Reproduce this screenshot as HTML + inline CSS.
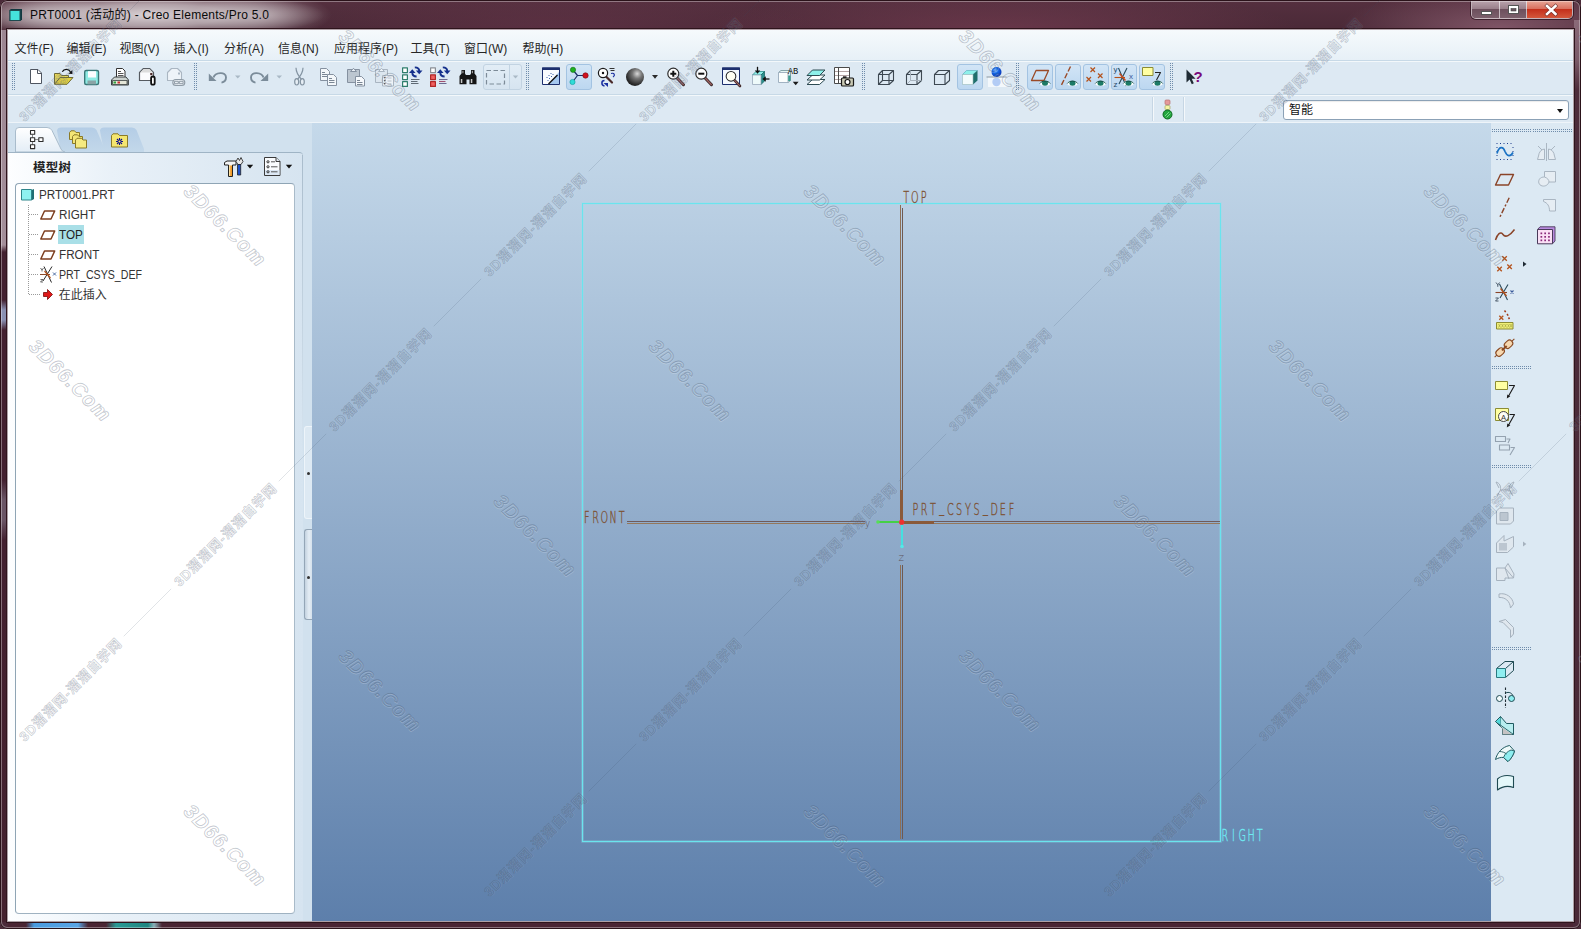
<!DOCTYPE html>
<html lang="zh-CN">
<head>
<meta charset="utf-8">
<title>PRT0001 (活动的) - Creo Elements/Pro 5.0</title>
<style>
*{box-sizing:border-box;margin:0;padding:0}
html,body{width:1581px;height:929px;overflow:hidden;background:#4a2a38}
body{font-family:"Liberation Sans","Noto Sans CJK SC",sans-serif;font-size:12px;color:#222;position:relative}
#frame{position:absolute;left:0;top:0;width:1581px;height:929px;background:#4b2a39;border-radius:7px;overflow:hidden}
#titleglow{position:absolute;left:0;top:0;width:1581px;height:30px;
 background:
  radial-gradient(ellipse 175px 24px at 150px 15px,rgba(255,255,255,.78) 0,rgba(255,255,255,.55) 45%,rgba(255,255,255,0) 100%),
  radial-gradient(ellipse 70px 22px at 40px 15px,rgba(255,255,255,.45),rgba(255,255,255,0) 100%),
  radial-gradient(ellipse 70px 22px at 262px 15px,rgba(255,255,255,.4),rgba(255,255,255,0) 100%),
  radial-gradient(ellipse 160px 40px at 1500px 28px,rgba(170,120,140,.55),rgba(170,120,140,0) 100%),
  radial-gradient(ellipse 300px 40px at 1000px 30px,rgba(140,70,95,.45),rgba(140,70,95,0) 100%),
  radial-gradient(ellipse 260px 40px at 560px 30px,rgba(120,60,85,.35),rgba(120,60,85,0) 100%),
  linear-gradient(#55303f,#4a2937)}
#lstrip{position:absolute;left:1px;top:30px;width:6px;height:892px;background:linear-gradient(#9c8692 0,#a48f9a 215px,#432130 222px,#432130 270px,#8a90b2 280px,#8a90b2 290px,#432130 300px,#432130 450px,#6a5565 470px,#6a5565 490px,#432130 510px,#45222f 100%)}
#rstrip{position:absolute;left:1574px;top:20px;width:6px;height:902px;background:linear-gradient(#8a6a78 0,#7a5a68 40px,#4d2c3a 70px,#4a2937 100%)}
#bstrip{position:absolute;left:8px;top:922px;width:1565px;height:6px;background:linear-gradient(90deg,#4a2533 18px,#4a9be0 26px,#5aa5e6 70px,#4a2533 80px,#4a2533 98px,#2a9a95 108px,#1f8580 140px,#8ab0b8 146px,#4a2533 154px,#4a2533 100%)}
#edge{position:absolute;left:0;top:0;width:1581px;height:929px;border-radius:7px;box-shadow:inset 0 0 0 1px #2a1219, inset 0 0 0 2px rgba(255,255,255,.35);pointer-events:none}
#title{position:absolute;left:30px;top:7px;font-size:12px;line-height:16px;color:#0a0a0a;white-space:nowrap;letter-spacing:.25px}
#cbtn{position:absolute;left:1471px;top:1px;width:102px;height:18px;border:1px solid rgba(255,255,255,.6);border-top:none;border-radius:0 0 5px 5px;overflow:hidden;box-shadow:0 0 0 1px rgba(40,15,25,.7)}
#cbtn div{position:absolute;top:0;height:17px}
#bmin{left:0;width:28px;background:linear-gradient(#b9a3ac 0,#9a808b 45%,#6d505d 50%,#7c606c 100%);border-right:1px solid rgba(255,255,255,.6)}
#bmax{left:28px;width:27px;background:linear-gradient(#b9a3ac 0,#9a808b 45%,#6d505d 50%,#7c606c 100%);border-right:1px solid rgba(255,255,255,.6)}
#bclose{left:55px;width:45px;background:linear-gradient(#e7a596 0,#d9705f 45%,#c4301c 50%,#d4573c 100%)}
#client{position:absolute;left:8px;top:30px;width:1565px;height:891px;background:#dde9f3;overflow:hidden}
#cborder{position:absolute;left:7px;top:29px;width:1567px;height:893px;border:1px solid rgba(255,255,255,.55);box-shadow:0 0 0 1px #2e141c;pointer-events:none}
#menubar{position:absolute;left:0;top:0;width:1565px;height:30px;background:linear-gradient(#f6fafc,#e7f0f7)}
.mi{position:absolute;top:11.500px;font-size:12px;line-height:14px;color:#262626;white-space:nowrap}
.hl{position:absolute;left:0;width:1565px;height:1px}
.grip{position:absolute;width:3px;height:27px;top:33px;
 background-image:linear-gradient(#dde9f3 1px,transparent 1px),linear-gradient(90deg,#6f8cab 1px,transparent 1px,transparent 2px,#6f8cab 2px);background-size:3px 2px,3px 2px;background-position:0 1px,0 0}
.tbact{position:absolute;top:34px;width:26px;height:26px;border:1px solid #a3c3e2;border-radius:3px;background:linear-gradient(#d2e5f6,#bcd7f0)}
#vp{position:absolute;left:304px;top:93px;width:1179px;height:798px;background:linear-gradient(#c5d9ea,#5d7fab)}
#left{position:absolute;left:0;top:93px;width:304px;height:798px;background:#d1e1ee}
#right{position:absolute;left:1483px;top:93px;width:82px;height:798px;background:#dce9f3}
.hgrip{position:absolute;height:3px;background-image:linear-gradient(90deg,#dce9f3 1px,transparent 1px),linear-gradient(#6f8cab 1px,transparent 1px,transparent 2px,#6f8cab 2px);background-size:2px 3px,2px 3px;background-position:1px 0,0 0}
#combo{position:absolute;left:1275px;top:70px;width:286px;height:20px;border:1px solid #8ba1b6;border-radius:3px;background:#fff;box-shadow:inset 0 1px 1px rgba(0,0,0,.08)}
#combo span{position:absolute;left:5px;top:2px;font-size:12px;line-height:15px;color:#111}
#combo i{position:absolute;right:5px;top:8px;width:0;height:0;border:3.5px solid transparent;border-top:4px solid #111;border-bottom:none}
.vsep{position:absolute;top:67px;width:2px;height:24px;border-left:1px solid #c6d6e4;border-right:1px solid #f4f8fb}
/* left panel */
.tab{position:absolute;top:4px;height:25px}
#panel{position:absolute;left:0;top:29px;width:295px;height:769px;border-top:1px solid #9fb4c5;border-radius:0 4px 0 0;background:linear-gradient(90deg,#fdfeff 0,#e9f1f8 35%,#d6e4f0 100%)}
#pedge{position:absolute;left:294px;top:2px;width:1px;height:300px;background:linear-gradient(#a9bccc 0,#b9cad8 30%,rgba(200,214,226,0) 100%)}
#phead{position:absolute;left:25px;top:7px;font-weight:bold;font-size:12.5px;line-height:16px;color:#222;letter-spacing:.3px}
#tree{position:absolute;left:7px;top:30px;width:280px;height:731px;border:1px solid #8fa5b5;border-right-color:#a9bbc9;border-bottom-color:#9fb2c1;border-radius:4px;background:#fff}
.tr{position:absolute;font-size:12px;line-height:16px;color:#333;white-space:nowrap;transform-origin:0 50%;transform:scaleX(.975)}
.sash{position:absolute;left:296px;width:9px;border-radius:3px 0 0 3px}
</style>
</head>
<body>
<div id="frame">
 <div id="titleglow"></div>
 <div id="title">PRT0001 (活动的) - Creo Elements/Pro 5.0</div>
 <div id="cbtn"><div id="bmin"></div><div id="bmax"></div><div id="bclose"></div></div>
 <div id="client">
  <div id="menubar">
   <span class="mi" style="left:6.5px">文件(F)</span>
   <span class="mi" style="left:58.5px">编辑(E)</span>
   <span class="mi" style="left:111.5px">视图(V)</span>
   <span class="mi" style="left:165.5px">插入(I)</span>
   <span class="mi" style="left:216px">分析(A)</span>
   <span class="mi" style="left:270px">信息(N)</span>
   <span class="mi" style="left:326px">应用程序(P)</span>
   <span class="mi" style="left:402.5px">工具(T)</span>
   <span class="mi" style="left:456px">窗口(W)</span>
   <span class="mi" style="left:514.5px">帮助(H)</span>
  </div>
  <div class="hl" style="top:30px;background:#c7d9e7"></div>
  <div class="hl" style="top:31px;background:#f3f8fb"></div>
  <div class="hl" style="top:64px;background:#c7d9e7"></div>
  <div class="hl" style="top:65px;background:#f3f8fb"></div>
  <div class="hl" style="top:92px;background:#eef4f9"></div>
  <!-- toolbar grips -->
  <div class="grip" style="left:4px"></div>
  <div class="grip" style="left:186px"></div>
  <div class="grip" style="left:518px"></div>
  <div class="grip" style="left:854px"></div>
  <div class="grip" style="left:1008px"></div>
  <div class="grip" style="left:1162px"></div>
  <!-- active toolbar buttons -->
  <div class="tbact" style="left:558px"></div>
  <div class="tbact" style="left:949px"></div>
  <div class="tbact" style="left:1019px"></div>
  <div class="tbact" style="left:1047px"></div>
  <div class="tbact" style="left:1075px"></div>
  <div class="tbact" style="left:1103px"></div>
  <div class="tbact" style="left:1131px"></div>
  <div style="position:absolute;left:475px;top:34px;width:39px;height:26px;border:1px solid #c2d3e2;border-radius:3px;background:linear-gradient(#e2edf6,#d6e4f0)"></div>
  <div style="position:absolute;left:501px;top:35px;width:1px;height:24px;background:#c2d3e2"></div>
  <!-- row 2 -->
  <div class="vsep" style="left:1144px"></div>
  <div class="vsep" style="left:1175px"></div>
  <div id="combo"><span>智能</span><i></i></div>
  <div id="left">
   <svg class="tab" style="left:6px;width:130px" viewBox="0 0 130 25">
    <defs><linearGradient id="tg" x1="0" y1="0" x2="0" y2="1"><stop offset="0" stop-color="#ffffff"/><stop offset="1" stop-color="#e3edf6"/></linearGradient>
    <linearGradient id="tg2" x1="0" y1="0" x2="0" y2="1"><stop offset="0" stop-color="#b4cde6"/><stop offset="1" stop-color="#c3d8ea"/></linearGradient></defs>
    <path d="M43 3.5 Q43.5 0.5 47 0.5 L78 0.5 Q81 0.5 82.5 3 L92 25 L47 25 Z" fill="url(#tg2)"/>
    <path d="M86 3.5 Q86.5 0.5 90 0.5 L118 0.5 Q121 0.5 122.5 3 L130 22 L130 25 L90 25 Z" fill="url(#tg2)"/>
    <path d="M1.5 25 L1.5 4 Q1.5 0.5 5 0.5 L33 0.5 Q36.5 0.5 38 3.5 L47 22 Q48 24.5 51 25 Z" fill="url(#tg)" stroke="#a9bccc" stroke-width="1"/>
   </svg>
   <div id="panel">
    <div id="pedge"></div>
    <div id="phead">模型树</div>
    <div id="tree">
     <div class="tr" style="left:22.500px;top:3.300px">PRT0001.PRT</div>
     <div class="tr" style="left:42.700px;top:23.300px">RIGHT</div>
     <div style="position:absolute;left:42px;top:41px;width:26px;height:19px;background:#a9dfe7"></div>
     <div class="tr" style="left:42.700px;top:43.300px;color:#222">TOP</div>
     <div class="tr" style="left:42.700px;top:63.300px">FRONT</div>
     <div class="tr" style="left:42.700px;top:83.300px;transform:scaleX(.885)">PRT_CSYS_DEF</div>
     <div class="tr" style="left:42.700px;top:103px;transform:none">在此插入</div>
    </div>
   </div>
   <div class="sash" style="top:303px;height:93px;border:1px solid rgba(240,246,250,.9);border-right:none;background:rgba(228,238,246,.6)"></div>
   <div class="sash" style="top:406px;height:91px;border:1px solid #94a6b7;border-right:none;background:linear-gradient(90deg,#c3d2e0,#e4edf5 50%,#cfdce8)"></div>
   <div style="position:absolute;left:299px;top:348.500px;width:3px;height:3px;border-radius:2px;background:#333"></div>
   <div style="position:absolute;left:299px;top:452.500px;width:3px;height:3px;border-radius:2px;background:#333"></div>
  </div>
  <div id="vp"></div>
  <div id="right">
   <div class="hgrip" style="left:1px;top:6px;width:39px"></div>
   <div class="hgrip" style="left:42px;top:6px;width:40px"></div>
   <div class="hgrip" style="left:1px;top:243px;width:39px"></div>
   <div class="hgrip" style="left:1px;top:342px;width:39px"></div>
   <div class="hgrip" style="left:1px;top:524px;width:39px"></div>
  </div>
 </div>
 <div id="lstrip"></div><div id="rstrip"></div><div id="bstrip"></div>
 <div id="cborder"></div>
 <div id="edge"></div>
 <svg id="ov" width="1581" height="929" viewBox="0 0 1581 929" style="position:absolute;left:0;top:0;pointer-events:none" font-family="'Liberation Sans','Noto Sans CJK SC',sans-serif">
  <!-- ===== viewport graphics ===== -->
  <rect x="582.5" y="203.5" width="638" height="638" fill="none" stroke="#8fe6ee" stroke-width="2.400" opacity=".38"/>
  <g shape-rendering="crispEdges">
   <rect x="582.5" y="203.5" width="638" height="638" fill="none" stroke="#6ae4ee" stroke-width="1"/>
   <!-- vertical datum (double line) -->
   <rect x="900" y="205" width="1" height="285" fill="#8d6f55"/>
   <rect x="902" y="208" width="1" height="282" fill="#6f5a52"/>
   <rect x="900" y="565" width="1" height="274" fill="#8d6f55"/>
   <rect x="902" y="565" width="1" height="274" fill="#6f5a52"/>
   <rect x="900" y="490" width="3" height="30" fill="#8a5a3a"/>
   <!-- horizontal datum -->
   <rect x="627" y="521" width="238" height="1" fill="#6f5a5a"/>
   <rect x="627" y="523" width="238" height="1" fill="#94785c"/>
   <rect x="934" y="521" width="286" height="1" fill="#6f5a5a"/>
   <rect x="934" y="523" width="286" height="1" fill="#94785c"/>
   <rect x="904" y="521" width="30" height="3" fill="#8a5a3a"/>
   <!-- csys -->
   <rect x="877" y="521" width="22" height="2" fill="#45d045"/>
   <rect x="901" y="525" width="2" height="22" fill="#45e0e0"/>
  </g>
  <circle cx="878" cy="522" r="1.8" fill="#55e055"/>
  <circle cx="902" cy="546.5" r="1.8" fill="#55e8e8"/>
  <circle cx="901.7" cy="522.2" r="2.6" fill="#ee3030"/>
  <g font-family="'DejaVu Sans Light','DejaVu Sans',sans-serif" font-weight="200" font-size="15.6" fill="#7d5234" stroke="#7d5234" stroke-width=".4" text-anchor="middle" style="vector-effect:non-scaling-stroke">
   <text transform="scale(0.62 1)" x="1461.45 1475.56 1489.68" y="203.2">TOP</text>
   <text transform="scale(0.62 1)" x="946.45 960.56 974.68 988.79 1002.90" y="522.6">FRONT</text>
   <text transform="scale(0.62 1)" x="1476.45 1490.56 1504.68 1518.79 1532.90 1547.02 1561.13 1575.24 1589.35 1603.47 1617.58 1631.69" y="515.2" dy="0 0 0 -3 3 0 0 0 -3 3 0 0">PRT_CSYS_DEF</text>
   <text transform="scale(0.62 1)" x="1975.48 1989.60 2003.71 2017.82 2031.94" y="841.4" fill="#6eeaf2" stroke="#6eeaf2">RIGHT</text>
   <text x="867.5" y="526.5" font-size="11" fill="#5e5660" stroke="none" textLength="5.5" lengthAdjust="spacingAndGlyphs">y</text>
   <text x="901.3" y="561" font-size="11" fill="#5e5660" stroke="none" textLength="5.5" lengthAdjust="spacingAndGlyphs">z</text>
  </g>
  <!-- ===== title bar icon & window buttons ===== -->
  <g>
   <path d="M9.500 10 L11 9 H22 V19.500 L20.500 21 H9.500 Z" fill="#123840"/>
   <rect x="10" y="10.500" width="10" height="10" fill="#45e2dc" stroke="#1d4a50" stroke-width="1"/>
   <rect x="1481.5" y="11.5" width="10" height="3" fill="#fff" stroke="#555" stroke-width="1"/>
   <rect x="1508.500" y="5.500" width="10" height="8" fill="#fff" stroke="#555" stroke-width="1"/>
   <rect x="1511" y="8.5" width="5" height="2.5" fill="#6b5560" stroke="#444" stroke-width=".6"/>
   <path d="M1547 6 L1555.500 14 M1555.500 6 L1547 14" stroke="#5a2a2a" stroke-width="3.800" stroke-linecap="square" fill="none" opacity=".7"/><path d="M1547 6 L1555.500 14 M1555.500 6 L1547 14" stroke="#fff" stroke-width="2.500" stroke-linecap="square" fill="none"/>
  </g>
  <!-- ===== toolbar row 1 ===== -->
  <g stroke-linejoin="round">
   <!-- new -->
   <path d="M30.5 69.500 H38 L41.500 73 V83.500 H30.500 Z" fill="#fff" stroke="#4e5560"/>
   <path d="M37.5 69.500 V73.5 H41.500" fill="none" stroke="#4e5560"/>
   <!-- open -->
   <path d="M54.5 84 V73.500 H60 L61.5 75.500 H68.5 V78" fill="#e9da55" stroke="#6e6a35"/>
   <path d="M54.500 84.300 L60 77.500 H73 L67 84.300 Z" fill="#e3d13f" stroke="#6e6a35"/>
   <path d="M62.300 71.800 C64 68.700, 68.500 68.500, 70.500 71.800" fill="none" stroke="#111" stroke-width="1.300"/>
   <path d="M68.300 73.700 L72.400 70 V74 Z" fill="#111"/>
   <!-- save -->
   <rect x="84.700" y="70.500" width="13.800" height="14" rx="1.500" fill="#8eebe4" stroke="#3b7878" stroke-width="1.400"/>
   <rect x="88" y="71.200" width="8" height="6.300" fill="#fdfdff"/>
   <rect x="87.500" y="80.500" width="8.500" height="3.800" fill="#8aa4a6"/>
   <!-- print -->
   <path d="M116.500 78 V68.500 H122.500 L125 71 V78" fill="#fff" stroke="#333"/>
   <path d="M118 71.5 H121 M118 73.500 H123.500 M118 75.500 H123.500" stroke="#555" stroke-width="1" fill="none"/>
   <path d="M111.500 80 L114.500 77 H126 L128.500 80 V85 H111.500 Z" fill="#cdd3d0" stroke="#3a4040"/>
   <path d="M127.300 80 H128.500 V85 H127.300 Z" fill="#5a6262"/>
   <rect x="112.5" y="80.500" width="14.500" height="4" fill="#e4e6d8" stroke="#3a4040" stroke-width=".8"/>
   <rect x="113.5" y="81.5" width="2.5" height="2" fill="#30a040"/>
   <rect x="117.5" y="81.5" width="2.5" height="2" fill="#d03030"/>
   <!-- mail attach -->
   <path d="M139.500 72.500 L143.500 68.500 H149.500 L153.500 72.500 V80.500 H139.500 Z" fill="#fbfbfd" stroke="#555a60" stroke-width="1.2"/>
   <path d="M140 72.500 L143.700 69 H149.300 L153 72.500 Z" fill="#dcdcdc"/>
   <rect x="150.200" y="73" width="2.200" height="2.200" fill="#4a2a2a"/>
   <rect x="151.100" y="76.500" width="3.600" height="8.200" rx="1.800" fill="#fff" stroke="#111" stroke-width="1.800"/>
   <!-- mail link (disabled) -->
   <g stroke="#aab6c2" fill="none">
    <path d="M167.500 72.500 L171.500 68.500 H177.500 L181.500 72.500 V80.500 H167.500 Z" fill="#eef3f8" stroke-width="1.1"/>
    <rect x="178" y="72.500" width="2" height="2" fill="#aab6c2" stroke="none"/>
    <rect x="172.800" y="79.500" width="12" height="6" rx="3" fill="#e8eef4" stroke="#8f9ba6" stroke-width="1.100"/>
    <rect x="174.500" y="81.300" width="3.800" height="2.400" fill="none" stroke="#8f9ba6" stroke-width="1"/>
    <rect x="179.300" y="81.300" width="3.800" height="2.400" fill="none" stroke="#8f9ba6" stroke-width="1"/>
   </g>
   <!-- undo / redo -->
   <g id="undo" fill="#7b8c9a">
    <path d="M208.8 73.600 V80.900 H216.500 Z"/>
    <path d="M213.5 77.500 C215 72.500, 226 71, 226 77.300 C226 80.500, 224 82.200, 221.500 82.600" fill="none" stroke="#7b8c9a" stroke-width="1.900"/>
   </g>
   <use href="#undo" transform="translate(477,0) scale(-1,1)"/>
   <path d="M235 75.500 H240.500 L237.750 78.500 Z M276.500 75.500 H282 L279.250 78.500 Z" fill="#aab9c6"/>
   <!-- cut -->
   <g stroke="#8494a2" fill="none" stroke-width="1.200">
    <path d="M296 67.800 C296 71, 298.500 76, 301.500 79.500 M303 67.800 C303 71, 300.500 76, 297.500 79.500"/>
    <ellipse cx="296.7" cy="81.800" rx="2" ry="3.200" fill="#e6eef5"/>
    <ellipse cx="302.3" cy="81.800" rx="2" ry="3.200" fill="#e6eef5"/>
   </g>
   <!-- copy -->
   <g stroke="#8591a0" fill="#f3f7fa" stroke-width="1">
    <path d="M320.500 68.500 H326.500 L329.500 71.500 V80.500 H320.500 Z"/>
    <path d="M322 72.500 H325 M322 74.500 H327.500 M322 76.500 H327.500" stroke="#7a8694"/>
    <path d="M327.500 74.500 H333.500 L336.500 77.500 V85.500 H327.500 Z"/>
    <path d="M329 78.500 H332 M329 80.500 H334.500 M329 82.500 H334.500" stroke="#7a8694"/>
   </g>
   <!-- paste -->
   <g stroke="#8591a0" stroke-width="1">
    <rect x="347.5" y="69.500" width="12" height="13" fill="#bcc6d0"/>
    <path d="M350.500 71.500 L353.500 68.300 L356.500 71.500 Z" fill="#e8eef4"/>
    <path d="M355.500 76.500 H361.500 L364.500 79.500 V86 H355.500 Z" fill="#f6f9fc"/>
    <path d="M357 80.500 H360 M357 82.500 H362.500 M357 84.500 H362.500" stroke="#7a8694"/>
   </g>
   <!-- paste special (disabled) -->
   <g stroke="#a9b5c1" stroke-width="1">
    <rect x="375.5" y="69.500" width="12" height="13" fill="#dce6ef"/>
    <path d="M378.500 71.500 L381.500 68.300 L384.500 71.500 Z" fill="#eef3f8"/>
    <rect x="382.5" y="75.500" width="11" height="10.500" fill="#eef3f8"/>
    <path d="M384 78 l1.500 -1 M384 81 l1.500 -1 M384 84 l1.500 -1" stroke="#555" stroke-width="1.300"/>
    <path d="M387.500 78 h4 M387.500 81 h4 M387.500 84 h4" stroke="#b4bfca"/>
   </g>
   <!-- regenerate -->
   <g id="regen">
    <g fill="#fff" stroke="#2e7d6c" stroke-width="1.200">
     <rect x="402.6" y="67.800" width="4.800" height="4.800"/><rect x="402.6" y="74.800" width="4.800" height="4.800"/><rect x="402.6" y="81.600" width="4.800" height="4.800"/>
    </g>
    <g id="cyc">
     <path d="M412.300 72.500 C412.300 75, 413.500 76.500, 416.600 76.500" fill="none" stroke="#15308c" stroke-width="1.900"/>
     <path d="M409 73 L412.300 69.300 L415.600 73 Z" fill="#15308c"/>
     <path d="M419.200 71 C419.200 68.500, 418 67.400, 414.800 67.400" fill="none" stroke="#15308c" stroke-width="1.900"/>
     <path d="M415.900 70.600 L419.200 74.300 L422.500 70.600 Z" fill="#15308c"/>
    </g>
    <path d="M411 79.500 H419.500 M411 81.500 H417.500 M411 83.500 H418.500" stroke="#5f6a74" stroke-width="1.100"/>
   </g>
   <g>
    <rect x="430.600" y="67.800" width="4.800" height="4.800" fill="#fff" stroke="#8a8f96" stroke-width="1.200"/>
    <rect x="430.600" y="74.800" width="4.800" height="4.800" fill="#f06060" stroke="#b02828" stroke-width="1.200"/>
    <rect x="430.600" y="81.600" width="4.800" height="4.800" fill="#f06060" stroke="#b02828" stroke-width="1.200"/>
    <use href="#cyc" transform="translate(28,0)"/>
    <path d="M439 79.500 H447.500 M439 83.500 H446.500" stroke="#6a6a90" stroke-width="1.100"/>
    <path d="M439 81.500 H445.500" stroke="#a05070" stroke-width="1.100"/>
   </g>
   <!-- binoculars -->
   <g fill="#151515">
    <path d="M459.500 84.300 V76 L461.500 73.500 V70 H465 V73.500 L466.500 76 V84.300 Z"/>
    <path d="M469.500 84.300 V76 L471 73.500 V70 H474.500 V73.500 L476.500 76 V84.300 Z"/>
    <rect x="465" y="75" width="6" height="4.500"/>
    <rect x="460.800" y="79" width="1.500" height="4" fill="#c8c8c8"/>
    <rect x="470.800" y="79" width="1.500" height="4" fill="#c8c8c8"/>
    <rect x="462.300" y="70.800" width="1.200" height="2.400" fill="#999"/>
    <rect x="471.800" y="70.800" width="1.200" height="2.400" fill="#999"/>
   </g>
   <!-- select box -->
   <rect x="486.500" y="70.500" width="18" height="13.500" fill="none" stroke="#7d8b98" stroke-width="1.200" stroke-dasharray="4.500 2.500"/>
   <path d="M512.800 75.500 H518.200 L515.500 78.500 Z" fill="#aab9c6"/>
  </g>
  <defs>
   <radialGradient id="sph" cx="0.62" cy="0.32" r="0.75"><stop offset="0" stop-color="#d8d8d8"/><stop offset=".35" stop-color="#777"/><stop offset=".8" stop-color="#2c2c2c"/><stop offset="1" stop-color="#1a1a1a"/></radialGradient>
   <radialGradient id="bball" cx="0.4" cy="0.35" r="0.7"><stop offset="0" stop-color="#7db8ff"/><stop offset=".4" stop-color="#1468e8"/><stop offset="1" stop-color="#0a2fb0"/></radialGradient>
   <g id="eye">
    <ellipse cx="0" cy="0" rx="5.200" ry="2.300" fill="#fff"/>
    <ellipse cx="0" cy="-.2" rx="3" ry="2.500" fill="#1c7a66"/>
    <path d="M-5.200 0 C-3 -3.200, 3 -3.200, 5.200 0" fill="none" stroke="#134f44" stroke-width="1"/>
   </g>
   <g id="mag">
    <path d="M3.300 3.800 L10.200 11" stroke="#3a2626" stroke-width="3" stroke-linecap="round"/>
    <path d="M3.800 4.300 L10 10.800" stroke="#a06464" stroke-width="1.200" stroke-linecap="round"/>
    <circle cx="0" cy="0" r="5.500" fill="#fdfdfd" stroke="#2a2a2a" stroke-width="1.200"/>
   </g>
   <g id="cubew" fill="none" stroke="#3d4852" stroke-width="1.100">
    <rect x="0.500" y="4.500" width="10.500" height="10"/>
    <path d="M0.500 4.500 L4.500 0.500 H15.500 V10.500 L11 14.500 M11 4.500 L15.500 0.500"/>
   </g>
  </defs>
  <g stroke-linejoin="round">
   <!-- repaint -->
   <rect x="542.500" y="68" width="17" height="16.500" fill="#fafcff" stroke="#1b2e6e"/>
   <rect x="542" y="67.500" width="18" height="2.500" fill="#1b2e6e"/>
   <path d="M559 72 V84 H549 Z" fill="#a5c8f0"/>
   <path d="M548.500 84 L557.500 75" stroke="#111" stroke-width="1.500"/>
   <path d="M546.500 77.500 h1 M548.500 75.500 h1 M550.500 73.500 h1 M549 78.500 h1 M551 76.500 h1 M547.500 80.500 h1 M552.500 74.500 h1" stroke="#3a60a8" stroke-width="1"/>
   <!-- spin center -->
   <path d="M573 70 L577.500 75.500 L572.500 82 M577.500 75.500 H585" fill="none" stroke="#1c2f66" stroke-width="1.200"/>
   <circle cx="573" cy="69.800" r="2.600" fill="#1fb21f" stroke="#0d6a10" stroke-width=".6"/>
   <circle cx="572.500" cy="82" r="2.600" fill="#2fdcd8" stroke="#139a98" stroke-width=".6"/>
   <circle cx="585.500" cy="75.500" r="2.700" fill="#d0101e" stroke="#7a0a10" stroke-width=".6"/>
   <!-- orient mode -->
   <path d="M606 76.500 L612 82.500" stroke="#4a2a2a" stroke-width="2.200" stroke-linecap="round"/>
   <circle cx="603" cy="73" r="4.600" fill="#fff" stroke="#1a1a1a" stroke-width="1.200"/>
   <circle cx="603" cy="73" r="1.200" fill="#111"/>
   <path d="M609.500 68.500 H614.500 M610.500 70.500 H614.500" stroke="#333" stroke-width="1"/>
   <path d="M611 73.500 C614.500 72.500, 615.500 75.500, 613 77" fill="none" stroke="#1a2fa0" stroke-width="1.200"/>
   <path d="M604.500 80.500 C601 80.500, 601 85.500, 604.500 86" fill="none" stroke="#1a2fa0" stroke-width="1.500"/>
   <path d="M603.500 83 H608 V87 Z" fill="#1a2fa0"/>
   <!-- shading sphere -->
   <circle cx="635" cy="77" r="9" fill="url(#sph)"/>
   <path d="M652 75 H658 L655 78.800 Z" fill="#2a2a2a"/>
   <!-- zoom in / out / refit -->
   <use href="#mag" transform="translate(673.300,73.700)"/>
   <path d="M670.300 73.700 H676.300 M673.300 70.700 V76.700" stroke="#111" stroke-width="2"/>
   <use href="#mag" transform="translate(701.300,73.700)"/>
   <path d="M698.300 73.700 H704.300" stroke="#111" stroke-width="2"/>
   <rect x="722.500" y="68" width="17" height="16.500" fill="#f4f9ff" stroke="#1b2e6e"/>
   <rect x="722" y="67.500" width="18" height="2.500" fill="#1b2e6e"/>
   <g transform="translate(731,76.300) scale(.88)"><use href="#mag"/></g>
   <circle cx="731" cy="76.300" r="3.900" fill="#fffff2"/>
   <!-- reorient -->
   <path d="M752.500 75 L756 71.500 H764.500 L761 75 Z" fill="#8eeee8" stroke="#2a8a88" stroke-width=".8"/>
   <path d="M761 75 L764.500 71.500 V81 L761 84.500 Z" fill="#2a8f8c" stroke="#1d6a68" stroke-width=".8"/>
   <rect x="752.500" y="75" width="8.500" height="9.500" fill="#eefafa" stroke="#9ab" stroke-width=".8"/>
   <path d="M757.500 66.800 V72" stroke="#111" stroke-width="1.300"/><path d="M754.800 70.500 H760.200 L757.500 73.800 Z" fill="#111"/>
   <path d="M769.500 79 H764.500" stroke="#111" stroke-width="1.300"/><path d="M765.800 76.300 V81.700 L762.300 79 Z" fill="#111"/>
   <!-- view manager -->
   <path d="M778.500 72.500 L781 70.500 H790.500 V80.500 L788 82.500" fill="#e4f4f4" stroke="#7a9aa0" stroke-width=".9"/>
   <rect x="778.500" y="72.500" width="9.500" height="10" fill="#fafdfd" stroke="#9ab" stroke-width=".9"/>
   <rect x="788.200" y="75.500" width="2.300" height="5.500" fill="#3a9a90"/>
   <text x="787.800" y="74" font-size="9" fill="#111" font-family="'Liberation Mono',monospace" textLength="10.500" lengthAdjust="spacingAndGlyphs">AB</text>
   <path d="M792.800 81.800 H798.600 L795.700 85.200 Z" fill="#1a1a1a"/>
   <!-- layers -->
   <g stroke="#2c4a52" stroke-width="1">
    <path d="M812.500 79.500 H825 L819.500 84.500 H807 Z" fill="#fff"/>
    <path d="M812.500 75 H825 L819.500 80 H807 Z" fill="#fff"/>
    <path d="M812.500 70 H825 L819.500 75.500 H807 Z" fill="#8ef0ea"/>
   </g>
   <!-- saved views -->
   <rect x="834.500" y="67.500" width="15" height="16" fill="#fff" stroke="#4a4a4a"/>
   <path d="M835 71.500 H849 M835 75.500 H849 M835 79.500 H849" stroke="#b4a4a4" stroke-width="1"/>
   <path d="M838.500 68 V83" stroke="#4a4a4a" stroke-width="1"/>
   <rect x="843" y="76.300" width="3.500" height="2" fill="#222"/>
   <rect x="841.500" y="78" width="12" height="8" rx="1" fill="#c9c9b4" stroke="#1a1a1a" stroke-width="1.200"/>
   <circle cx="847.500" cy="82" r="2.500" fill="#fff" stroke="#111" stroke-width="1.200"/>
   <!-- model display cubes -->
   <g transform="translate(878,70)"><use href="#cubew"/><path d="M4.500 0.500 V10.500 H15.500 M4.500 10.500 L0.500 14.500" fill="none" stroke="#3d4852" stroke-width="1.100"/></g>
   <g transform="translate(906,70)"><use href="#cubew"/><path d="M4.500 0.500 V10.500 H15.500 M4.500 10.500 L0.500 14.500" fill="none" stroke="#a7b2bd" stroke-width="1"/></g>
   <g transform="translate(934,70)"><use href="#cubew"/></g>
   <g transform="translate(962,70)">
    <path d="M0.500 4.500 L4.500 0.500 H15.500 L11 4.500 Z" fill="#8ef0ea" stroke="#5ab" stroke-width=".6"/>
    <path d="M11 4.500 L15.500 0.500 V10.500 L11 14.500 Z" fill="#1f6f6c"/>
    <rect x="0.500" y="4.500" width="10.500" height="10" fill="#f4fcfc" stroke="#9bb" stroke-width=".6"/>
   </g>
   <!-- enhanced realism -->
   <rect x="988" y="77" width="18.500" height="10" fill="#f7fafd" opacity=".85"/>
   <circle cx="996.500" cy="82" r="4.200" fill="#7da8ee" opacity=".55"/>
   <path d="M986.500 77 H1006.500" stroke="#8a96a0" stroke-width="1"/>
   <circle cx="996.500" cy="72" r="5" fill="url(#bball)"/>
   <!-- datum display toggles -->
   <path d="M1031.500 80.500 L1036 70.500 H1048.500 L1044 80.500 Z" fill="none" stroke="#9a4a28" stroke-width="1.300"/>
   <use href="#eye" transform="translate(1045,83.500)"/>
   <path d="M1070.500 66.500 L1061 86" stroke="#9a4a28" stroke-width="1.400" stroke-dasharray="5.500 2"/>
   <use href="#eye" transform="translate(1072.500,83.500)"/>
   <g stroke="#b4521c" stroke-width="1.200">
    <path d="M1090.500 67.500 l4.500 4.500 m0 -4.500 l-4.500 4.500 M1086.500 77 l4.500 4.500 m0 -4.500 l-4.500 4.500 M1098 73.500 l4.500 4.500 m0 -4.500 l-4.500 4.500"/>
   </g>
   <use href="#eye" transform="translate(1100.500,83.500)"/>
   <g stroke="#2a4a5a" stroke-width="1.100" fill="none">
    <path d="M1118.500 68 L1126 86 M1127 68 L1119 84"/>
    <path d="M1114.500 77.500 H1125" stroke="#b4521c"/>
    <path d="M1119.500 73.500 L1125.500 80.500" stroke="#c84a1c" stroke-width="1.400"/>
   </g>
   <text x="1113.500" y="72" font-size="8" fill="#2a4a6a">y</text>
   <text x="1113.500" y="86.500" font-size="8" fill="#2a4a6a">z</text>
   <text x="1129" y="79" font-size="8" fill="#3a5a9a">x</text>
   <use href="#eye" transform="translate(1128.500,83.500)"/>
   <rect x="1142.500" y="67.500" width="10.500" height="8" fill="#ffffa2" stroke="#8c8c34"/>
   <path d="M1155 72.500 H1160.500 L1156.500 80" fill="none" stroke="#222" stroke-width="1.100"/>
   <use href="#eye" transform="translate(1157.500,83.500)"/>
   <!-- help -->
   <path d="M1186.500 69.500 V82.500 L1189.600 79.600 L1191.800 84.300 L1193.800 83.300 L1191.700 78.800 H1195.600 Z" fill="#1f2a33"/>
   <text x="1193.500" y="82" font-size="15" font-weight="bold" fill="#7a0a7a">?</text>
   <!-- traffic light -->
   <rect x="1165" y="100" width="5" height="4.500" rx="1" fill="#e59a9a" stroke="#b87070" stroke-width=".7"/>
   <rect x="1165" y="105.500" width="5" height="4" rx="1" fill="#f5f5a5" stroke="#a8a860" stroke-width=".7"/>
   <circle cx="1167.500" cy="114.500" r="4.500" fill="#22a63e" stroke="#0f6a22" stroke-width="1"/>
   <path d="M1165 116 L1169 112 M1166.500 117.500 L1170.500 113.500" stroke="#8fe09f" stroke-width=".8"/>
  </g>
  <!-- ===== left panel icons ===== -->
  <g stroke-linejoin="round">
   <!-- tab 1: tree -->
   <path d="M32.500 134.500 V145 M35 139.500 H38.500" stroke="#8a8a8a" stroke-width="1" fill="none"/>
   <g fill="#fff" stroke="#2c2c2c" stroke-width="1.100">
    <rect x="30.500" y="130.500" width="4.200" height="3.800"/><rect x="30.500" y="137.700" width="4.200" height="3.800"/><rect x="30.500" y="144.800" width="4.200" height="3.800"/><rect x="38.800" y="137.700" width="4.200" height="3.800"/>
   </g>
   <!-- tab 2: folders -->
   <g id="fold" fill="#f4e676" stroke="#8a7a28" stroke-width="1">
    <path d="M69.500 139.500 V132.500 L71 130.800 H74.500 L76 132.500 H79.500 V139.500 Z"/>
   </g>
   <use href="#fold" transform="translate(3,4)"/>
   <path d="M75.500 148 V140 L77 138.300 H81.500 L83 140 H86.500 V148 Z" fill="#f6ea80" stroke="#8a7a28" stroke-width="1"/>
   <!-- tab 3: favorites folder -->
   <path d="M111.500 147 V135.500 L113 133.800 H118 L119.500 135.500 H127.500 V147 Z" fill="#f4e670" stroke="#8a7a28" stroke-width="1"/>
   <path d="M119.500 138 V145 M116 141.500 H123 M117 139 L122 144 M122 139 L117 144" stroke="#10108a" stroke-width="1.100"/>
   <circle cx="119.500" cy="141.500" r="1.100" fill="#f4e670"/>
   <!-- header: tools -->
   <path d="M224.500 165 V162.500 L227 161 H236 V165 H232.500 V176.500 H228.500 V165 Z" fill="#f4f4f4" stroke="#222" stroke-width="1"/>
   <rect x="229" y="165.500" width="3" height="10.500" fill="#f09a2a"/>
   <rect x="229" y="165.500" width="1.200" height="10.500" fill="#fde0a0"/>
   <path d="M236 161.500 L238 158 L239.500 160.500 L241 157.500 L243 161.500 L241 164.500 H238 Z" fill="#e8e8e8" stroke="#333" stroke-width=".9"/>
   <rect x="237.500" y="164.500" width="3.200" height="10.500" fill="#1c50c8" stroke="#222" stroke-width=".8"/>
   <path d="M246.800 164.800 H253.200 L250 168.600 Z" fill="#111"/>
   <!-- header: list -->
   <path d="M264.500 157.500 H276 L280 161.500 V175.500 H264.500 Z" fill="#fafcfe" stroke="#3a3a3a" stroke-width="1"/>
   <path d="M276 157.500 V161.500 H280" fill="#dfe7ef" stroke="#3a3a3a" stroke-width="1"/>
   <rect x="265" y="170" width="14.500" height="5" fill="#d4e2f2" opacity=".8"/>
   <g fill="none" stroke="#222" stroke-width=".9"><circle cx="268" cy="161.800" r="1.100"/><circle cx="268" cy="166.800" r="1.100"/><circle cx="268" cy="171.800" r="1.100"/></g>
   <path d="M271 161.800 H275 M271 166.800 H277.500 M271 171.800 H277.500" stroke="#555" stroke-width="1"/>
   <path d="M285.800 164.800 H292.200 L289 168.600 Z" fill="#111"/>
   <!-- tree connectors -->
   <g stroke="#9a9a9a" stroke-width="1" stroke-dasharray="1 1" shape-rendering="crispEdges" fill="none">
    <path d="M28.500 205 V295 M29 214.500 H39 M29 234.500 H39 M29 254.500 H39 M29 274.500 H39 M29 294.500 H40"/>
   </g>
   <!-- PRT icon -->
   <path d="M31.500 190 L34 189 V199 L31.500 200.500 Z" fill="#1f6f74"/>
   <rect x="21.500" y="189.500" width="10" height="10.500" fill="#8ef2f0" stroke="#2f858a" stroke-width="1"/>
   <!-- datum planes -->
   <g fill="none" stroke="#7d3f20" stroke-width="1.500">
    <path d="M40.800 219 L44.500 211 H54.700 L51 219 Z"/>
    <path d="M40.800 239 L44.500 231 H54.700 L51 239 Z"/>
    <path d="M40.800 259 L44.500 251 H54.700 L51 259 Z"/>
   </g>
   <!-- csys -->
   <g fill="none" stroke="#2a2a2a" stroke-width="1">
    <path d="M44 266.500 L51.500 282.500 M52 266.500 L43 281"/>
    <path d="M40 274.500 H50" stroke="#8a4a2c"/>
    <path d="M44.500 271 L50.500 278" stroke="#b4521c" stroke-width="1.200"/>
    <path d="M40.500 268 l1.500 2 l1.500 -2 M42 270 v1.500 M40.500 279.500 h2.500 l-2.500 2.500 h2.500" stroke="#444" stroke-width=".8"/>
    <path d="M53 272.500 l3 3 m0 -3 l-3 3" stroke="#4a6aa0" stroke-width="1"/>
   </g>
   <!-- insert arrow -->
   <path d="M43.500 292.500 H47.500 V289.500 L52.500 294.500 L47.500 299.500 V296.500 H43.500 Z" fill="#e01818" stroke="#7a0a0a" stroke-width=".8"/>
  </g>
  <!-- ===== right toolbar ===== -->
  <g stroke-linejoin="round">
   <!-- sketch -->
   <g fill="#1c3c8c">
    <path d="M1496.500 143.500 h1 m2.500 0 h1 m2.500 0 h1 m2.500 0 h1 m2.500 0 h1 M1496.500 159.500 h1 m2.500 0 h1 m2.500 0 h1 m2.500 0 h1 m2.500 0 h1 M1496.500 147.500 h1 M1496.500 151.500 h1 M1496.500 155.500 h1 M1512.500 147.500 h1 M1512.500 151.500 h1 M1512.500 155.500 h1" stroke="#1c3c8c" stroke-width="1.100"/>
   </g>
   <path d="M1497 153.500 C1499 146, 1503 146, 1505 151.500 C1507 156.500, 1510.500 157, 1513 152.500" fill="none" stroke="#1a72c4" stroke-width="1.700"/>
   <!-- plane -->
   <path d="M1495.500 185 L1500.500 174.500 H1513.500 L1508.500 185 Z" fill="none" stroke="#8a4428" stroke-width="1.400"/>
   <!-- axis -->
   <path d="M1509.200 197.800 L1499.600 217.600" stroke="#8a4428" stroke-width="1.400" stroke-dasharray="5.500 2 2 2"/>
   <!-- curve -->
   <path d="M1495.500 240 C1497.500 234, 1500.500 231, 1503 234.500 C1505.500 238, 1510 235.500, 1514.500 229.500" fill="none" stroke="#8a4428" stroke-width="1.500"/>
   <!-- points -->
   <g stroke="#b4521c" stroke-width="1.300">
    <path d="M1502.300 256.300 l4.500 4.500 m0 -4.500 l-4.500 4.500 M1497.300 266.800 l4.500 4.500 m0 -4.500 l-4.500 4.500 M1507.300 264.500 l4.500 4.500 m0 -4.500 l-4.500 4.500"/>
   </g>
   <path d="M1523 261.500 V266.800 L1526.500 264.100 Z" fill="#1f2a33"/>
   <!-- csys -->
   <g fill="none" stroke="#2a4a5a" stroke-width="1.100">
    <path d="M1499.500 284 L1507.500 300 M1508 284.500 L1500 298"/>
    <path d="M1495.500 292.500 H1507" stroke="#8a4428"/>
    <path d="M1500.500 288.500 L1506.500 296" stroke="#b4521c" stroke-width="1.300"/>
    <path d="M1496 282.500 l1.800 2.300 l1.800 -2.300 M1497.800 284.800 v2 M1495.500 298 h3 l-3 3 h3" stroke="#3a4a5a" stroke-width=".9"/>
    <path d="M1510.500 290.500 l3 3 m0 -3 l-3 3" stroke="#3a5a9a" stroke-width="1.100"/>
   </g>
   <!-- analysis -->
   <g stroke="#b4521c" stroke-width="1.300"><path d="M1499.300 315.800 l4 4 m0 -4 l-4 4"/><path d="M1504.500 310.500 l1.200 1.600 M1507 314 l1.200 1.600 M1508.500 317.500 l1 1.500" stroke="#a03a18" stroke-width="1.500"/></g>
   <rect x="1496.500" y="322.500" width="16.500" height="6.500" fill="#f0f078" stroke="#8c8c34"/>
   <path d="M1498.500 324 l2 3.500 M1501.500 324 l2 3.500 M1504.500 324 l2 3.500 M1507.500 324 l2 3.500 M1510 324 l2 3.500 M1500.500 324 l-2 3.500 M1503.500 324 l-2 3.500 M1506.500 324 l-2 3.500 M1509.500 324 l-2 3.500 M1512 324 l-2 3.500" stroke="#a0a040" stroke-width=".6"/>
   <!-- chain -->
   <g transform="rotate(-43 1504.500 348)" fill="#f6d8b0" stroke="#8a4a22" stroke-width="1.100">
    <path d="M1491 348 H1518" fill="none"/>
    <rect x="1494" y="344.800" width="9" height="6.400" rx="3"/>
    <rect x="1505.500" y="344.800" width="9" height="6.400" rx="3"/>
    <path d="M1501 348 H1507.500" stroke-width="2"/>
   </g>
   <!-- annotation 1 -->
   <rect x="1495.500" y="381.500" width="12" height="8" fill="#ffffa2" stroke="#8c8c34"/>
   <path d="M1509 385.500 H1514.500 L1508 397" fill="none" stroke="#1a1a1a" stroke-width="1.100"/>
   <path d="M1506.800 398.500 L1507.300 394.500 L1510.300 396.300 Z" fill="#1a1a1a"/>
   <!-- annotation 2 -->
   <rect x="1495.500" y="408.500" width="13" height="12" fill="#ffffa2" stroke="#8c8c34"/>
   <circle cx="1503.500" cy="416.500" r="5" fill="#fdfdf4" stroke="#444" stroke-width="1"/>
   <text x="1501" y="419.500" font-size="7.500" fill="#333">A</text>
   <path d="M1509.500 414.500 H1514.500 L1508 426" fill="none" stroke="#1a1a1a" stroke-width="1.100"/>
   <path d="M1506.800 427.500 L1507.300 423.500 L1510.300 425.300 Z" fill="#1a1a1a"/>
   <!-- annotation 3 (disabled) -->
   <g fill="none" stroke="#94a2b0" stroke-width="1.100">
    <rect x="1495.500" y="436.500" width="10" height="5"/>
    <rect x="1499.500" y="445" width="10" height="5"/>
    <path d="M1506.500 439 H1510 L1508 443 M1510.500 447.500 H1514.500 L1510 455"/>
   </g>
   <!-- disabled features -->
   <g fill="#dfe7ee" stroke="#a6b2be" stroke-width="1">
    <path d="M1496 482 C1499.500 483, 1501 486, 1500.500 490 H1509.500 C1509 486, 1510.500 483, 1514 482 M1496 482 L1499 488 M1514 482 L1511 488 M1500.500 490 L1497 496 M1509.500 490 L1513 496" fill="none"/>
    <path d="M1496.500 511 L1499.500 508 H1513.500 V521 L1510.500 524 H1496.500 Z"/>
    <rect x="1500" y="512.500" width="8" height="8" fill="#bcc6d0"/>
    <path d="M1496.500 543 L1504 535.500 V541 L1513.500 536.500 V547 L1507.500 552.500 H1496.500 Z" stroke-dasharray="none"/>
    <rect x="1499" y="543" width="8" height="7.500" fill="#bcc6d0" stroke="none"/>
    <path d="M1496.500 568 H1505 L1513.500 578 H1505 V580.500 H1496.500 Z M1505 568 L1508 563.500 L1514 574 L1513.500 578 M1505 568 L1509 579" />
    <path d="M1499 594 C1506 592.500, 1512.500 597, 1513.500 604 L1510.500 608 C1510 601, 1505 597, 1499 597.500 Z"/>
    <path d="M1499 621.500 L1505.500 619.500 L1513.500 627.500 V634 L1510.500 637.500 V630 L1503 622.500 Z"/>
   </g>
   <path d="M1523 541.500 V546.500 L1526.300 544 Z" fill="#a6b2be"/>
   <!-- extrude -->
   <path d="M1496.500 668.500 L1505 661.500 H1513.500 V670.500 L1505.500 677.500 M1505.500 668.500 L1513.500 661.500" fill="none" stroke="#1f4a52" stroke-width="1"/>
   <rect x="1496.500" y="668.500" width="9" height="9" fill="#8eeef0" stroke="#2a7a80"/>
   <!-- revolve -->
   <path d="M1505.500 687.500 V708" stroke="#1f2a33" stroke-width="1.100" stroke-dasharray="2.500 1.500"/>
   <path d="M1505.500 693 C1509 691.500, 1512 693, 1513 696" fill="none" stroke="#1f4a52" stroke-width="1"/>
   <circle cx="1499.500" cy="698.500" r="3" fill="#f4fbfc" stroke="#1f4a52" stroke-width="1"/>
   <circle cx="1511.500" cy="698.500" r="3" fill="#8eeef0" stroke="#1f4a52" stroke-width="1"/>
   <!-- sweep blend -->
   <path d="M1495.500 721.500 L1500.500 716.500 L1506.500 723.500 L1513.500 723.500 V734.500 H1502.500 V728.500 Z" fill="#b8eef0" stroke="#1f5a60" stroke-width="1"/>
   <path d="M1495.500 721.500 L1513.500 734.500 M1500.500 716.500 L1500 726" fill="none" stroke="#1f5a60" stroke-width=".9"/>
   <path d="M1499.500 725.500 L1502.500 728.500 V734.500 H1512.500 Z" fill="#c8b8b8" opacity=".8"/>
   <path d="M1496 721.500 L1500.500 717.500 L1500.200 724.500 Z" fill="#4fd8dc"/>
   <!-- boundary blend -->
   <path d="M1495.500 759.500 C1497 753, 1502 747, 1509.500 745.500 L1514.500 751 C1513.500 755, 1511 759, 1508 761.500 L1503.500 757.500 C1501 757, 1498 758, 1495.500 759.500 Z" fill="#eefafa" stroke="#1f5a60" stroke-width="1"/>
   <path d="M1503.500 757.500 C1505 753.500, 1507.500 751.500, 1511 750 L1514.500 751 C1513.500 755, 1511 759, 1508 761.500 Z" fill="#8eeef0" stroke="#1f5a60" stroke-width=".9"/>
   <path d="M1499.500 751.500 C1502 751.500, 1505 752.500, 1506.500 754" fill="none" stroke="#1f5a60" stroke-width=".9"/>
   <!-- style -->
   <path d="M1497.500 779 C1502 775, 1508 775, 1513.500 776.500 V787.500 C1508 785.500, 1502 786.500, 1497.500 790 Z" fill="#e4f8fa" stroke="#1f4a52" stroke-width="1.100"/>
   <!-- col 2: mirror (disabled) -->
   <g fill="#e6edf3" stroke="#aab6c2" stroke-width="1">
    <path d="M1546.500 143 V161" fill="none"/>
    <path d="M1537.500 159.500 H1544.500 V149 C1541 149.500, 1539 152, 1538.500 156 Z M1555.500 159.500 H1548.500 V149 C1552 149.500, 1554 152, 1554.500 156 Z"/>
    <path d="M1538 146 L1542 150 M1555 146 L1551 150" fill="none"/>
    <!-- merge -->
    <path d="M1544.500 171.500 H1555.500 V182 H1549 C1548 185.500, 1544 187, 1541 185.500 C1538 184, 1538 180, 1540.500 178 C1542 177, 1544 177, 1544.500 177 Z"/>
    <path d="M1544.500 177 C1547.500 178, 1549 180, 1549 182" fill="none"/>
    <!-- trim -->
    <path d="M1543.500 199.500 H1555.500 V211 H1549.500 C1549.500 206, 1547.500 203, 1543.500 201.500 Z"/>
   </g>
   <!-- pattern -->
   <path d="M1537.500 229.500 L1540 226.800 H1555 V241 L1552.500 243.800" fill="#b88adf" stroke="#4a3a5a" stroke-width=".9"/>
   <rect x="1537.500" y="229.500" width="15" height="14.300" fill="#fbe0f6" stroke="#4a3a5a" stroke-width="1"/>
   <g fill="#8a2a7a"><rect x="1540.500" y="232.500" width="1.700" height="1.700"/><rect x="1544.300" y="232.500" width="1.700" height="1.700"/><rect x="1548.100" y="232.500" width="1.700" height="1.700"/><rect x="1540.500" y="236" width="1.700" height="1.700"/><rect x="1544.300" y="236" width="1.700" height="1.700"/><rect x="1548.100" y="236" width="1.700" height="1.700"/><rect x="1540.500" y="239.500" width="1.700" height="1.700"/><rect x="1544.300" y="239.500" width="1.700" height="1.700"/><rect x="1548.100" y="239.500" width="1.700" height="1.700"/></g>
  </g>
  <!-- ===== watermark ===== -->
  <g fill="none" stroke-width=".9" font-weight="bold">
   <g transform="translate(70 380) rotate(45)" font-size="20" font-style="italic"><text x="-52.3" y="7.700" textLength="106" stroke="#ffffff" stroke-opacity=".2">3D66.Com</text><text x="-53" y="7" textLength="106" stroke="#3c4c64" stroke-opacity=".3">3D66.Com</text></g>
   <g transform="translate(225 225) rotate(45)" font-size="20" font-style="italic"><text x="-52.3" y="7.700" textLength="106" stroke="#ffffff" stroke-opacity=".2">3D66.Com</text><text x="-53" y="7" textLength="106" stroke="#3c4c64" stroke-opacity=".3">3D66.Com</text></g>
   <g transform="translate(225 845) rotate(45)" font-size="20" font-style="italic"><text x="-52.3" y="7.700" textLength="106" stroke="#ffffff" stroke-opacity=".2">3D66.Com</text><text x="-53" y="7" textLength="106" stroke="#3c4c64" stroke-opacity=".3">3D66.Com</text></g>
   <g transform="translate(380 70) rotate(45)" font-size="20" font-style="italic"><text x="-52.3" y="7.700" textLength="106" stroke="#ffffff" stroke-opacity=".2">3D66.Com</text><text x="-53" y="7" textLength="106" stroke="#3c4c64" stroke-opacity=".3">3D66.Com</text></g>
   <g transform="translate(380 690) rotate(45)" font-size="20" font-style="italic"><text x="-52.3" y="7.700" textLength="106" stroke="#ffffff" stroke-opacity=".2">3D66.Com</text><text x="-53" y="7" textLength="106" stroke="#3c4c64" stroke-opacity=".3">3D66.Com</text></g>
   <g transform="translate(535 535) rotate(45)" font-size="20" font-style="italic"><text x="-52.3" y="7.700" textLength="106" stroke="#ffffff" stroke-opacity=".2">3D66.Com</text><text x="-53" y="7" textLength="106" stroke="#3c4c64" stroke-opacity=".3">3D66.Com</text></g>
   <g transform="translate(690 380) rotate(45)" font-size="20" font-style="italic"><text x="-52.3" y="7.700" textLength="106" stroke="#ffffff" stroke-opacity=".2">3D66.Com</text><text x="-53" y="7" textLength="106" stroke="#3c4c64" stroke-opacity=".3">3D66.Com</text></g>
   <g transform="translate(845 225) rotate(45)" font-size="20" font-style="italic"><text x="-52.3" y="7.700" textLength="106" stroke="#ffffff" stroke-opacity=".2">3D66.Com</text><text x="-53" y="7" textLength="106" stroke="#3c4c64" stroke-opacity=".3">3D66.Com</text></g>
   <g transform="translate(845 845) rotate(45)" font-size="20" font-style="italic"><text x="-52.3" y="7.700" textLength="106" stroke="#ffffff" stroke-opacity=".2">3D66.Com</text><text x="-53" y="7" textLength="106" stroke="#3c4c64" stroke-opacity=".3">3D66.Com</text></g>
   <g transform="translate(1000 70) rotate(45)" font-size="20" font-style="italic"><text x="-52.3" y="7.700" textLength="106" stroke="#ffffff" stroke-opacity=".2">3D66.Com</text><text x="-53" y="7" textLength="106" stroke="#3c4c64" stroke-opacity=".3">3D66.Com</text></g>
   <g transform="translate(1000 690) rotate(45)" font-size="20" font-style="italic"><text x="-52.3" y="7.700" textLength="106" stroke="#ffffff" stroke-opacity=".2">3D66.Com</text><text x="-53" y="7" textLength="106" stroke="#3c4c64" stroke-opacity=".3">3D66.Com</text></g>
   <g transform="translate(1155 535) rotate(45)" font-size="20" font-style="italic"><text x="-52.3" y="7.700" textLength="106" stroke="#ffffff" stroke-opacity=".2">3D66.Com</text><text x="-53" y="7" textLength="106" stroke="#3c4c64" stroke-opacity=".3">3D66.Com</text></g>
   <g transform="translate(1310 380) rotate(45)" font-size="20" font-style="italic"><text x="-52.3" y="7.700" textLength="106" stroke="#ffffff" stroke-opacity=".2">3D66.Com</text><text x="-53" y="7" textLength="106" stroke="#3c4c64" stroke-opacity=".3">3D66.Com</text></g>
   <g transform="translate(1465 225) rotate(45)" font-size="20" font-style="italic"><text x="-52.3" y="7.700" textLength="106" stroke="#ffffff" stroke-opacity=".2">3D66.Com</text><text x="-53" y="7" textLength="106" stroke="#3c4c64" stroke-opacity=".3">3D66.Com</text></g>
   <g transform="translate(1465 845) rotate(45)" font-size="20" font-style="italic"><text x="-52.3" y="7.700" textLength="106" stroke="#ffffff" stroke-opacity=".2">3D66.Com</text><text x="-53" y="7" textLength="106" stroke="#3c4c64" stroke-opacity=".3">3D66.Com</text></g>
   <g transform="translate(1620 70) rotate(45)" font-size="20" font-style="italic"><text x="-52.3" y="7.700" textLength="106" stroke="#ffffff" stroke-opacity=".2">3D66.Com</text><text x="-53" y="7" textLength="106" stroke="#3c4c64" stroke-opacity=".3">3D66.Com</text></g>
   <g transform="translate(1620 690) rotate(45)" font-size="20" font-style="italic"><text x="-52.3" y="7.700" textLength="106" stroke="#ffffff" stroke-opacity=".2">3D66.Com</text><text x="-53" y="7" textLength="106" stroke="#3c4c64" stroke-opacity=".3">3D66.Com</text></g>
   <g transform="translate(70 70) rotate(-45)" font-size="13.5"><text x="-68.4" y="5.600" textLength="138" stroke="#ffffff" stroke-opacity=".1" stroke-width=".7">3D溜溜网-溜溜自学网</text><text x="-69" y="5" textLength="138" stroke="#3c4c64" stroke-opacity=".3" stroke-width=".7">3D溜溜网-溜溜自学网</text><path d="M76 0 H143" stroke="#3c4c64" stroke-opacity=".25" stroke-width=".6"/></g>
   <g transform="translate(70 690) rotate(-45)" font-size="13.5"><text x="-68.4" y="5.600" textLength="138" stroke="#ffffff" stroke-opacity=".1" stroke-width=".7">3D溜溜网-溜溜自学网</text><text x="-69" y="5" textLength="138" stroke="#3c4c64" stroke-opacity=".3" stroke-width=".7">3D溜溜网-溜溜自学网</text><path d="M76 0 H143" stroke="#3c4c64" stroke-opacity=".25" stroke-width=".6"/></g>
   <g transform="translate(225 535) rotate(-45)" font-size="13.5"><text x="-68.4" y="5.600" textLength="138" stroke="#ffffff" stroke-opacity=".1" stroke-width=".7">3D溜溜网-溜溜自学网</text><text x="-69" y="5" textLength="138" stroke="#3c4c64" stroke-opacity=".3" stroke-width=".7">3D溜溜网-溜溜自学网</text><path d="M76 0 H143" stroke="#3c4c64" stroke-opacity=".25" stroke-width=".6"/></g>
   <g transform="translate(380 380) rotate(-45)" font-size="13.5"><text x="-68.4" y="5.600" textLength="138" stroke="#ffffff" stroke-opacity=".1" stroke-width=".7">3D溜溜网-溜溜自学网</text><text x="-69" y="5" textLength="138" stroke="#3c4c64" stroke-opacity=".3" stroke-width=".7">3D溜溜网-溜溜自学网</text><path d="M76 0 H143" stroke="#3c4c64" stroke-opacity=".25" stroke-width=".6"/></g>
   <g transform="translate(535 225) rotate(-45)" font-size="13.5"><text x="-68.4" y="5.600" textLength="138" stroke="#ffffff" stroke-opacity=".1" stroke-width=".7">3D溜溜网-溜溜自学网</text><text x="-69" y="5" textLength="138" stroke="#3c4c64" stroke-opacity=".3" stroke-width=".7">3D溜溜网-溜溜自学网</text><path d="M76 0 H143" stroke="#3c4c64" stroke-opacity=".25" stroke-width=".6"/></g>
   <g transform="translate(535 845) rotate(-45)" font-size="13.5"><text x="-68.4" y="5.600" textLength="138" stroke="#ffffff" stroke-opacity=".1" stroke-width=".7">3D溜溜网-溜溜自学网</text><text x="-69" y="5" textLength="138" stroke="#3c4c64" stroke-opacity=".3" stroke-width=".7">3D溜溜网-溜溜自学网</text><path d="M76 0 H143" stroke="#3c4c64" stroke-opacity=".25" stroke-width=".6"/></g>
   <g transform="translate(690 70) rotate(-45)" font-size="13.5"><text x="-68.4" y="5.600" textLength="138" stroke="#ffffff" stroke-opacity=".1" stroke-width=".7">3D溜溜网-溜溜自学网</text><text x="-69" y="5" textLength="138" stroke="#3c4c64" stroke-opacity=".3" stroke-width=".7">3D溜溜网-溜溜自学网</text><path d="M76 0 H143" stroke="#3c4c64" stroke-opacity=".25" stroke-width=".6"/></g>
   <g transform="translate(690 690) rotate(-45)" font-size="13.5"><text x="-68.4" y="5.600" textLength="138" stroke="#ffffff" stroke-opacity=".1" stroke-width=".7">3D溜溜网-溜溜自学网</text><text x="-69" y="5" textLength="138" stroke="#3c4c64" stroke-opacity=".3" stroke-width=".7">3D溜溜网-溜溜自学网</text><path d="M76 0 H143" stroke="#3c4c64" stroke-opacity=".25" stroke-width=".6"/></g>
   <g transform="translate(845 535) rotate(-45)" font-size="13.5"><text x="-68.4" y="5.600" textLength="138" stroke="#ffffff" stroke-opacity=".1" stroke-width=".7">3D溜溜网-溜溜自学网</text><text x="-69" y="5" textLength="138" stroke="#3c4c64" stroke-opacity=".3" stroke-width=".7">3D溜溜网-溜溜自学网</text><path d="M76 0 H143" stroke="#3c4c64" stroke-opacity=".25" stroke-width=".6"/></g>
   <g transform="translate(1000 380) rotate(-45)" font-size="13.5"><text x="-68.4" y="5.600" textLength="138" stroke="#ffffff" stroke-opacity=".1" stroke-width=".7">3D溜溜网-溜溜自学网</text><text x="-69" y="5" textLength="138" stroke="#3c4c64" stroke-opacity=".3" stroke-width=".7">3D溜溜网-溜溜自学网</text><path d="M76 0 H143" stroke="#3c4c64" stroke-opacity=".25" stroke-width=".6"/></g>
   <g transform="translate(1155 225) rotate(-45)" font-size="13.5"><text x="-68.4" y="5.600" textLength="138" stroke="#ffffff" stroke-opacity=".1" stroke-width=".7">3D溜溜网-溜溜自学网</text><text x="-69" y="5" textLength="138" stroke="#3c4c64" stroke-opacity=".3" stroke-width=".7">3D溜溜网-溜溜自学网</text><path d="M76 0 H143" stroke="#3c4c64" stroke-opacity=".25" stroke-width=".6"/></g>
   <g transform="translate(1155 845) rotate(-45)" font-size="13.5"><text x="-68.4" y="5.600" textLength="138" stroke="#ffffff" stroke-opacity=".1" stroke-width=".7">3D溜溜网-溜溜自学网</text><text x="-69" y="5" textLength="138" stroke="#3c4c64" stroke-opacity=".3" stroke-width=".7">3D溜溜网-溜溜自学网</text><path d="M76 0 H143" stroke="#3c4c64" stroke-opacity=".25" stroke-width=".6"/></g>
   <g transform="translate(1310 70) rotate(-45)" font-size="13.5"><text x="-68.4" y="5.600" textLength="138" stroke="#ffffff" stroke-opacity=".1" stroke-width=".7">3D溜溜网-溜溜自学网</text><text x="-69" y="5" textLength="138" stroke="#3c4c64" stroke-opacity=".3" stroke-width=".7">3D溜溜网-溜溜自学网</text><path d="M76 0 H143" stroke="#3c4c64" stroke-opacity=".25" stroke-width=".6"/></g>
   <g transform="translate(1310 690) rotate(-45)" font-size="13.5"><text x="-68.4" y="5.600" textLength="138" stroke="#ffffff" stroke-opacity=".1" stroke-width=".7">3D溜溜网-溜溜自学网</text><text x="-69" y="5" textLength="138" stroke="#3c4c64" stroke-opacity=".3" stroke-width=".7">3D溜溜网-溜溜自学网</text><path d="M76 0 H143" stroke="#3c4c64" stroke-opacity=".25" stroke-width=".6"/></g>
   <g transform="translate(1465 535) rotate(-45)" font-size="13.5"><text x="-68.4" y="5.600" textLength="138" stroke="#ffffff" stroke-opacity=".1" stroke-width=".7">3D溜溜网-溜溜自学网</text><text x="-69" y="5" textLength="138" stroke="#3c4c64" stroke-opacity=".3" stroke-width=".7">3D溜溜网-溜溜自学网</text><path d="M76 0 H143" stroke="#3c4c64" stroke-opacity=".25" stroke-width=".6"/></g>
   <g transform="translate(1620 380) rotate(-45)" font-size="13.5"><text x="-68.4" y="5.600" textLength="138" stroke="#ffffff" stroke-opacity=".1" stroke-width=".7">3D溜溜网-溜溜自学网</text><text x="-69" y="5" textLength="138" stroke="#3c4c64" stroke-opacity=".3" stroke-width=".7">3D溜溜网-溜溜自学网</text><path d="M76 0 H143" stroke="#3c4c64" stroke-opacity=".25" stroke-width=".6"/></g>
  </g>
 </svg>
</div>
</body>
</html>
